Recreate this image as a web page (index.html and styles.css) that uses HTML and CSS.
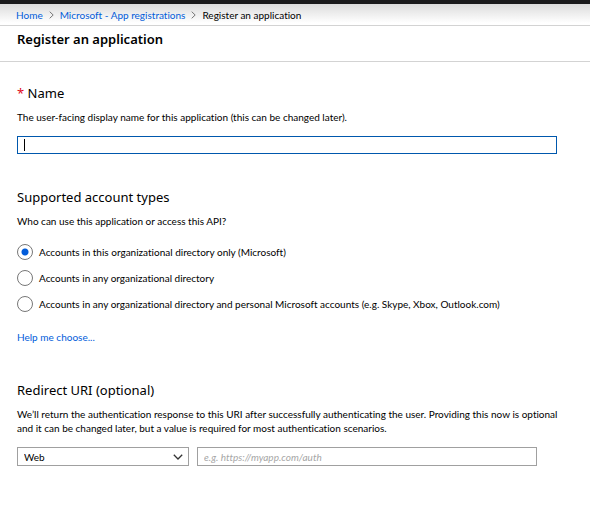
FILE: index.html
```html
<!DOCTYPE html>
<html lang="en">
<head>
<meta charset="utf-8">
<title>Register an application</title>
<meta name="viewport" content="width=device-width, initial-scale=1">
<link rel="stylesheet" href="styles.css">
</head>
<body>
<div class="topbar"></div>
<nav class="breadcrumb" aria-label="Breadcrumb">
  <a href="#">Home</a>
  <svg class="separator" viewBox="0 0 5 8" aria-hidden="true"><path d="M.7.7 4.2 4 .7 7.3"/></svg>
  <a href="#">Microsoft - App registrations</a>
  <svg class="separator" viewBox="0 0 5 8" aria-hidden="true"><path d="M.7.7 4.2 4 .7 7.3"/></svg>
  <span>Register an application</span>
</nav>
<header class="page-header">
  <h1>Register an application</h1>
</header>
<main>
  <form class="form">
    <section class="section">
      <h2><label for="name"><span class="required">*</span> Name</label></h2>
      <p>The user-facing display name for this application (this can be changed later).</p>
      <div class="name-row"><input class="field name-field" id="name" type="text"></div>
    </section>
    <section class="section">
      <h2 id="types">Supported account types</h2>
      <p>Who can use this application or access this API?</p>
      <div class="options" role="radiogroup" aria-labelledby="types">
        <label class="option"><input type="radio" name="type" checked>Accounts in this organizational directory only (Microsoft)</label>
        <label class="option"><input type="radio" name="type">Accounts in any organizational directory</label>
        <label class="option"><input type="radio" name="type">Accounts in any organizational directory and personal Microsoft accounts (e.g. Skype, Xbox, Outlook.com)</label>
      </div>
      <a class="help" href="#">Help me choose...</a>
    </section>
    <section class="section">
      <h2 id="redirect">Redirect URI (optional)</h2>
      <p>We’ll return the authentication response to this URI after successfully authenticating the user. Providing this now is optional and it can be changed later, but a value is required for most authentication scenarios.</p>
      <div class="redirect">
        <div class="select">
          <select class="field" aria-label="Platform"><option>Web</option></select>
          <svg class="chevron" viewBox="0 0 10 6" aria-hidden="true"><path d="M.8.8 5 5 9.2.8"/></svg>
        </div>
        <input class="field uri-field" type="text" aria-labelledby="redirect" placeholder="e.g. https://myapp.com/auth">
      </div>
    </section>
  </form>
</main>
</body>
</html>
```
FILE: styles.css
```css
* {
  box-sizing: border-box;
}

body {
  margin: 0;
  background: #fff;
  color: #000;
  font: 10px/14px Lato, "Open Sans", sans-serif;
  font-variant-ligatures: none;
}

a {
  color: #015cda;
  text-decoration: none;
}

h1, h2, p {
  margin: 0;
}

.topbar {
  height: 4px;
  background: #1b1b1c;
}

.breadcrumb {
  display: flex;
  align-items: center;
  gap: 6px;
  height: 22px;
  padding: 0 16px;
  border-bottom: 1px solid #d3d3d3;
  background: linear-gradient(#dcdcdc, #fff 90%);
}

.separator {
  width: 5px;
  height: 8px;
  fill: none;
  stroke: #777;
}

.page-header {
  height: 36px;
  padding: 3px 17px;
  border-bottom: 1px solid #d3d3d3;
}

h1 {
  font: 600 13px/20px "Noto Sans", "Open Sans", sans-serif;
}

.form {
  max-width: 590px;
  padding: 21px 17px 0;
}

.section {
  margin-bottom: 33px;
}

h2 {
  margin-bottom: 7px;
  font: 400 13px/20px "Noto Sans", "Open Sans", sans-serif;
}

.required {
  color: #e00b1c;
}

.field {
  display: block;
  width: 100%;
  height: 19px;
  padding: 0 6px;
  border: 1px solid #a0a0a0;
  border-radius: 0;
  background: #fff;
  color: #000;
  font: inherit;
  outline: 0;
  appearance: none;
}

.name-row {
  margin: 12px 16px 0 0;
}

.name-field {
  height: 18px;
  border-color: #0058ad;
  background: linear-gradient(#000, #000) 6px 2px / 1px 12px no-repeat #fff;
}

.options {
  display: grid;
  gap: 10px;
  margin-top: 16px;
}

.option {
  display: flex;
  align-items: center;
  gap: 6px;
  height: 16px;
  white-space: nowrap;
}

.option input {
  flex: none;
  width: 16px;
  height: 16px;
  margin: 0;
  border: 1px solid #777;
  border-radius: 50%;
  background: #fff;
  appearance: none;
}

.option input:checked {
  background: radial-gradient(circle, #015cda 3px, #fff 4px);
}

.help {
  display: block;
  margin-top: 18px;
  margin-bottom: 36px;
}

.redirect {
  display: grid;
  grid-template-columns: 172fr 340fr;
  gap: 8px;
  margin: 12px 36px 0 0;
}

.select {
  position: relative;
}

.chevron {
  position: absolute;
  top: 7px;
  right: 6px;
  width: 10px;
  height: 6px;
  fill: none;
  stroke: #333;
  stroke-width: 1.3;
  pointer-events: none;
}

.uri-field::placeholder {
  color: #a6a6a6;
  font-style: italic;
  opacity: 1;
}
```
